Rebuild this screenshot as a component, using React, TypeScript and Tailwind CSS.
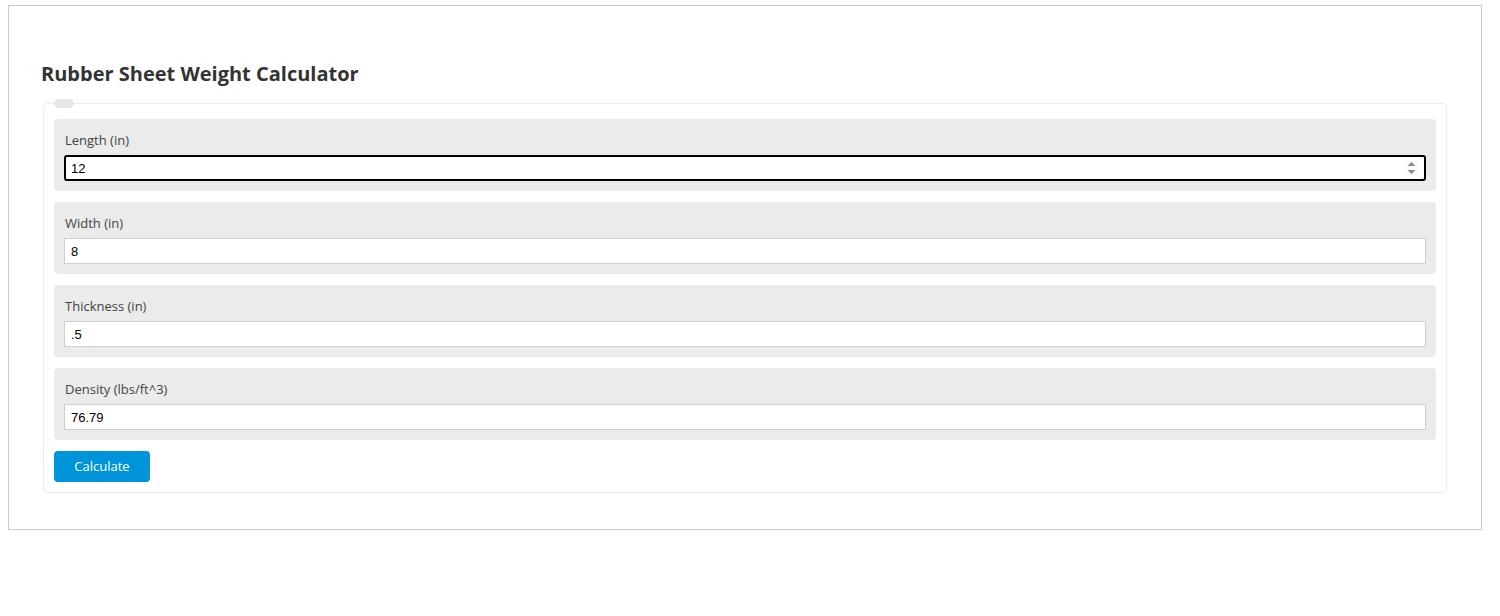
import { useState } from 'react'

const fields = [
  { label: 'Length (in)', value: '12' },
  { label: 'Width (in)', value: '8' },
  { label: 'Thickness (in)', value: '.5' },
  { label: 'Density (lbs/ft^3)', value: '76.79' },
]

function Field({ label, initial, focused }: { label: string; initial: string; focused?: boolean }) {
  const [value, setValue] = useState(initial)
  return (
    <div className="rounded-[4px] bg-[#eaebeb] px-[10px] pt-[11px] pb-[10px]">
      <label className="block h-[20px] pl-[1px] text-[13px] leading-[20px] text-[#444]">{label}</label>
      <div className="mt-[5px]">
        <input
          type="number"
          value={value}
          autoFocus={focused}
          onChange={(e) => setValue(e.target.value)}
          className={
            focused
              ? 'block h-[26px] w-full rounded-[3px] border-2 border-black bg-white px-[5px] font-["Liberation_Sans",Arial,sans-serif] text-[13px] text-black outline-none'
              : 'block h-[26px] w-full border border-[#cfcfcf] bg-white px-[6px] font-["Liberation_Sans",Arial,sans-serif] text-[13px] text-black outline-none [appearance:textfield] [&::-webkit-inner-spin-button]:appearance-none'
          }
        />
      </div>
    </div>
  )
}

export default function App() {
  return (
    <div className="min-h-[616px] bg-white pt-[5px] pl-[8px] pr-[18px] font-['Open_Sans','Noto_Sans',sans-serif]">
      <div className="h-[525px] border border-[#cccccc] pl-[32px] pr-[34px] pt-[53px]">
        <h1 className="text-[20px] font-bold leading-[30px] text-[#333]">Rubber Sheet Weight Calculator</h1>
        <fieldset className="relative mt-[14px] ml-[2px] rounded-[4px] border border-[#ececec] px-[10px] pt-[15px] pb-[10px]">
          <span className="absolute -top-[5px] left-[10px] h-[9px] w-[20px] rounded-full bg-[#e6e6e6]" />
          <div className="flex flex-col gap-[11px]">
            {fields.map((f, i) => (
              <Field key={f.label} label={f.label} initial={f.value} focused={i === 0} />
            ))}
            <div>
              <button className="h-[31px] w-[96px] rounded-[4px] bg-[#0094da] text-[13px] text-white">Calculate</button>
            </div>
          </div>
        </fieldset>
      </div>
    </div>
  )
}
